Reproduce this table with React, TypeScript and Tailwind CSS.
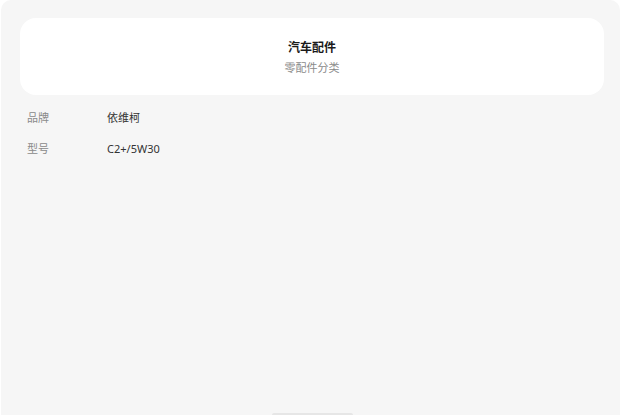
export default function App() {
  const rows = [
    { label: "品牌", value: "依维柯" },
    { label: "型号", value: "C2+/5W30" },
  ];

  return (
    <div
      className="h-[415px] w-[621px] bg-white pl-px pr-[1px]"
      style={{ fontFamily: '"Noto Sans", "Noto Sans CJK SC", sans-serif' }}
    >
      <div className="relative flex h-full flex-col rounded-t-[10px] bg-[#f6f6f6] pt-[18px]">
        {/* 分类卡片 */}
        <div className="ml-[19px] mr-[16px] flex h-[77px] flex-col items-center justify-center rounded-2xl bg-white pt-[2px]">
          <div className="text-[12px] font-bold leading-[16px] text-[#1a1a1a]">汽车配件</div>
          <div className="mt-[4px] text-[11px] leading-[15px] text-[#8a8a8a]">零配件分类</div>
        </div>

        <div className="mt-[8px] flex flex-col">
          {rows.map((r) => (
            <div key={r.label} className="flex h-[31px] items-center pl-[26px] text-[11px]">
              <span className="w-[80px] text-[#8a8a8a]">{r.label}</span>
              <span className="text-[#333333]">{r.value}</span>
            </div>
          ))}
        </div>

        <div className="absolute bottom-0 left-[271px] h-[2px] w-[81px] rounded-t bg-[#e6e6e6]" />
      </div>
    </div>
  );
}
